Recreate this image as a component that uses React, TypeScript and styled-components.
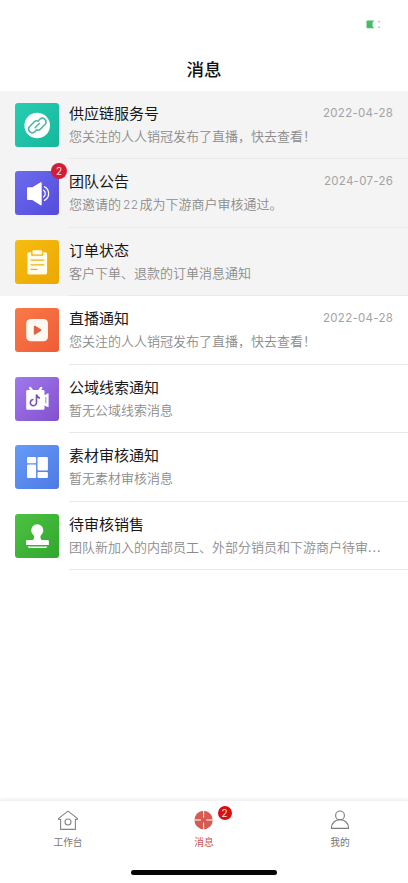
import React from "react";
import styled, { createGlobalStyle } from "styled-components";

const GlobalStyle = createGlobalStyle`
  * { box-sizing: border-box; }
  html, body { margin: 0; padding: 0; background: #fff; }
  body { font-family: "Noto Sans CJK SC", sans-serif; overflow: hidden; }
`;

const Screen = styled.div`
  width: 408px;
  height: 883px;
  display: flex;
  flex-direction: column;
  background: #fff;
`;

const StatusBar = styled.div`
  height: 47px;
  flex: none;
  display: flex;
  justify-content: flex-end;
  padding: 19px 26px 0 0;
`;

const Header = styled.header`
  height: 44px;
  flex: none;
  display: flex;
  justify-content: center;
  font-size: 17.5px;
  font-weight: 500;
  line-height: 44px;
  color: #111;
`;

const List = styled.main`
  flex: 1;
  min-height: 0;
`;

const Row = styled.article<{ $pinned?: boolean }>`
  height: 68.45px;
  display: flex;
  padding-left: 15px;
  background: ${(p) => (p.$pinned ? "#f4f4f4" : "#fff")};
`;

const Tile = styled.div<{ $from: string; $to: string }>`
  position: relative;
  width: 44px;
  height: 44px;
  flex: none;
  margin-top: 12px;
  border-radius: 3px;
  background: linear-gradient(135deg, ${(p) => p.$from}, ${(p) => p.$to});
  svg { display: block; }
`;

const Badge = styled.span<{ $top: number; $left: number; $size: number; $color: string }>`
  position: absolute;
  top: ${(p) => p.$top}px;
  left: ${(p) => p.$left}px;
  width: ${(p) => p.$size}px;
  height: ${(p) => p.$size}px;
  line-height: ${(p) => p.$size}px;
  border-radius: 50%;
  background: ${(p) => p.$color};
  color: #ffe3dd;
  font-family: Inter, sans-serif;
  font-size: 10px;
  text-align: center;
`;

const Content = styled.div`
  flex: 1;
  min-width: 0;
  margin-left: 10px;
  padding: 10px 15px 0 0;
  border-bottom: 1px solid #e9e9e9;
`;

const TitleLine = styled.div`
  display: flex;
  justify-content: space-between;
  height: 23px;
  line-height: 23px;
`;

const Title = styled.span`
  font-size: 15px;
  color: #181818;
`;

const DateText = styled.time`
  font-family: Inter, sans-serif;
  font-size: 11.5px;
  line-height: 25px;
  letter-spacing: 0.3px;
  margin-right: -0.3px;
  color: #a3a3a3;
`;

const Description = styled.p`
  margin: 0;
  height: 22px;
  line-height: 23px;
  font-size: 13px;
  font-weight: 350;
  color: #8b8b8b;
  white-space: nowrap;
`;

const Ellipsis = styled.span`
  letter-spacing: 1px;
`;

const Count = styled.span`
  margin: 0 1px 0 2px;
  font-family: Inter, sans-serif;
  font-size: 12px;
  letter-spacing: 0.4px;
`;

const TabBar = styled.nav`
  height: 83px;
  flex: none;
  display: grid;
  grid-template-columns: repeat(3, 1fr);
  grid-template-rows: 61px 1fr;
  justify-items: center;
  border-top: 1px solid #f2f2f2;
  box-shadow: 0 -1px 3px rgba(0, 0, 0, 0.07);
`;

const Tab = styled.div<{ $active?: boolean }>`
  position: relative;
  display: flex;
  flex-direction: column;
  align-items: center;
  padding-top: 8px;
  font-size: 9.7px;
  line-height: 15px;
  color: ${(p) => (p.$active ? "#c65550" : "#777")};
  svg { margin-bottom: 3.5px; }
`;

const HomeIndicator = styled.div`
  grid-column: 1 / -1;
  width: 146px;
  height: 5px;
  margin-top: 8px;
  border-radius: 3px;
  background: #050505;
`;

const BatteryIcon = () => (
  <svg width="16" height="12" viewBox="0 0 16 12">
    <path d="M1.5 1.5h6.8L6.6 3.4v4.2l1.8 1.6H1.5Q.5 9.2.5 8.2V2.5q0-1 1-1Z" fill="#45bd66" />
    <circle cx="13" cy="2.7" r=".75" fill="#999" />
    <circle cx="13" cy="8.2" r=".75" fill="#999" />
  </svg>
);

const LinkIcon = () => (
  <svg width="44" height="44" viewBox="0 0 44 44" fill="none">
    <circle cx="22.2" cy="22.5" r="12.8" fill="#fff" />
    <g stroke="#51b79f" strokeWidth="1.5" strokeLinecap="round" strokeLinejoin="round">
      <path d="M20.8 27.7l-1.2 1.2a3.7 3.7 0 0 1-5.2-5.2l4.8-4.8a3.7 3.7 0 0 1 4.2-.7" />
      <path d="M23.8 17.3l1.2-1.2a3.7 3.7 0 0 1 5.2 5.2l-4.8 4.8a3.7 3.7 0 0 1-4.2.7" />
      <path d="M20.1 24.7l4.4-4.5" />
    </g>
  </svg>
);

const SpeakerIcon = () => (
  <svg width="44" height="44" viewBox="0 0 44 44" fill="none">
    <path d="M13 16.2h4.3l8.3-4.9q1.1-.5 1.1.7v21.6q0 1.2-1.1.6L17.3 29H13q-1 0-1-1V17.2q0-1 1-1Z" fill="#fff" />
    <path d="M28.5 19.2c2.4 1.4 2.4 5.3 0 6.8M29.5 15.8c5.5 2.8 5.5 10.8 0 13.6" stroke="#fff" strokeWidth="1.3" strokeLinecap="round" />
  </svg>
);

const ClipboardIcon = () => (
  <svg width="44" height="44" viewBox="0 0 44 44" fill="none">
    <path d="M14 12.2h2.2v3.6h12v-3.6h2.3q1.6 0 1.6 1.6v19q0 1.6-1.6 1.6H14q-1.6 0-1.6-1.6v-19q0-1.6 1.6-1.6Z" fill="#fffbed" />
    <rect x="17.5" y="10.2" width="9.7" height="4.2" rx="1" fill="#fffbed" />
    <path d="M16 20.1h12.8M16 24.8h12.8M16 29.4h6" stroke="#edb217" strokeWidth="1.3" strokeLinecap="round" />
  </svg>
);

const PlayIcon = () => (
  <svg width="44" height="44" viewBox="0 0 44 44">
    <rect x="11.2" y="11" width="21.8" height="22.2" rx="4.5" fill="#fff9f3" />
    <path d="M19.8 18.7v7l5.6-3.5Z" fill="#dc6544" stroke="#dc6544" strokeWidth="2" strokeLinejoin="round" />
  </svg>
);

const VideoIcon = () => (
  <svg width="44" height="44" viewBox="0 0 44 44" fill="none">
    <path d="M15.1 10.9l2.3 3M26.2 10.9L23.9 14" stroke="#fff" strokeWidth="2.4" strokeLinecap="round" />
    <path d="M12.5 13h15.7q1.3 0 1.3 1.3v4l3.1-1.8q1-.5 1 .5v12.5q0 1-1 .5l-3.1-1.6v3.1q0 1.3-1.3 1.3H12.5q-1.3 0-1.3-1.3V14.3q0-1.3 1.3-1.3Z" fill="#fff" />
    <path d="M21.5 17.5v8.1a3.1 3.1 0 1 1-3-3.1M21.5 17.5q.6 3 3.5 3.5" stroke="#7650b8" strokeWidth="1.6" />
    <path d="M30.8 20v6.3" stroke="#8c63d5" strokeWidth=".8" />
  </svg>
);

const LayoutIcon = () => (
  <svg width="44" height="44" viewBox="0 0 44 44" fill="#fff">
    <rect x="12" y="12" width="9.1" height="6.2" rx="1" />
    <rect x="22.5" y="12" width="10.4" height="13.5" rx="1" />
    <rect x="12" y="19.5" width="9.1" height="13.5" rx="1" />
    <rect x="22.5" y="27" width="10.4" height="6" rx="1" />
  </svg>
);

const StampIcon = () => (
  <svg width="44" height="44" viewBox="0 0 44 44" fill="#fff">
    <path d="M18.7 21.4a6.1 6.1 0 1 1 7.1 0c-.7.8-.4 2.6.6 4.5h6.1q1.4 0 1.4 1.4V31H11v-3.7q0-1.4 1.4-1.4h5.8c1-1.9 1.2-3.7.5-4.5Z" />
    <path d="M12.5 32.4h20l-1.3 1.7H13.8Z" />
  </svg>
);

const HomeIcon = () => (
  <svg width="22" height="22" viewBox="0 0 22 22" fill="none" stroke="#858585" strokeWidth="1.1" strokeLinejoin="round">
    <path d="M1.6 9.4L11 2.1l9.4 7.3v1h-2v10H3.6v-10h-2Z" />
    <circle cx="11" cy="13" r="3" />
  </svg>
);

const TargetIcon = () => (
  <svg width="22" height="22" viewBox="0 0 22 22">
    <circle cx="10.6" cy="11" r="9.2" fill="#d65c53" />
    <path d="M10.6 1.5v7M10.6 13.7v7M1.2 11h6.7M13.3 11H20" stroke="#fff" strokeWidth="1" />
  </svg>
);

const PersonIcon = () => (
  <svg width="22" height="22" viewBox="0 0 22 22" fill="none" stroke="#7b7b7b" strokeWidth="1.1" strokeLinejoin="round">
    <circle cx="11" cy="6.4" r="4.4" />
    <path d="M2.5 19.4v-1.1a8.5 7.5 0 0 1 17 0v1.1Z" />
  </svg>
);

interface Message {
  title: string;
  text: React.ReactNode;
  date?: string;
  pinned?: boolean;
  badge?: number;
  colors: [string, string];
  icon: React.ReactNode;
}

const messages: Message[] = [
  { title: "供应链服务号", text: "您关注的人人销冠发布了直播，快去查看！", date: "2022-04-28", pinned: true, colors: ["#27cdb2", "#16b79b"], icon: <LinkIcon /> },
  { title: "团队公告", text: <>您邀请的<Count>22</Count>成为下游商户审核通过。</>, date: "2024-07-26", pinned: true, badge: 2, colors: ["#6b6ced", "#554bdc"], icon: <SpeakerIcon /> },
  { title: "订单状态", text: "客户下单、退款的订单消息通知", pinned: true, colors: ["#f5bd11", "#eda703"], icon: <ClipboardIcon /> },
  { title: "直播通知", text: "您关注的人人销冠发布了直播，快去查看！", date: "2022-04-28", colors: ["#f97a48", "#ef5c36"], icon: <PlayIcon /> },
  { title: "公域线索通知", text: "暂无公域线索消息", colors: ["#a079ee", "#8251ce"], icon: <VideoIcon /> },
  { title: "素材审核通知", text: "暂无素材审核消息", colors: ["#659bf5", "#4e79e6"], icon: <LayoutIcon /> },
  { title: "待审核销售", text: <>团队新加入的内部员工、外部分销员和下游商户待审<Ellipsis>...</Ellipsis></>, colors: ["#4dc143", "#30a72c"], icon: <StampIcon /> },
];

export default function App() {
  return (
    <>
      <GlobalStyle />
      <Screen>
        <StatusBar><BatteryIcon /></StatusBar>
        <Header>消息</Header>
        <List>
          {messages.map((m) => (
            <Row key={m.title} $pinned={m.pinned}>
              <Tile $from={m.colors[0]} $to={m.colors[1]}>
                {m.icon}
                {m.badge && <Badge $top={-8} $left={36} $size={16} $color="#d51c36">{m.badge}</Badge>}
              </Tile>
              <Content>
                <TitleLine>
                  <Title>{m.title}</Title>
                  {m.date && <DateText>{m.date}</DateText>}
                </TitleLine>
                <Description>{m.text}</Description>
              </Content>
            </Row>
          ))}
        </List>
        <TabBar>
          <Tab><HomeIcon />工作台</Tab>
          <Tab $active>
            <TargetIcon />消息
            <Badge $top={5} $left={24.5} $size={14} $color="#d80e13">2</Badge>
          </Tab>
          <Tab><PersonIcon />我的</Tab>
          <HomeIndicator />
        </TabBar>
      </Screen>
    </>
  );
}
